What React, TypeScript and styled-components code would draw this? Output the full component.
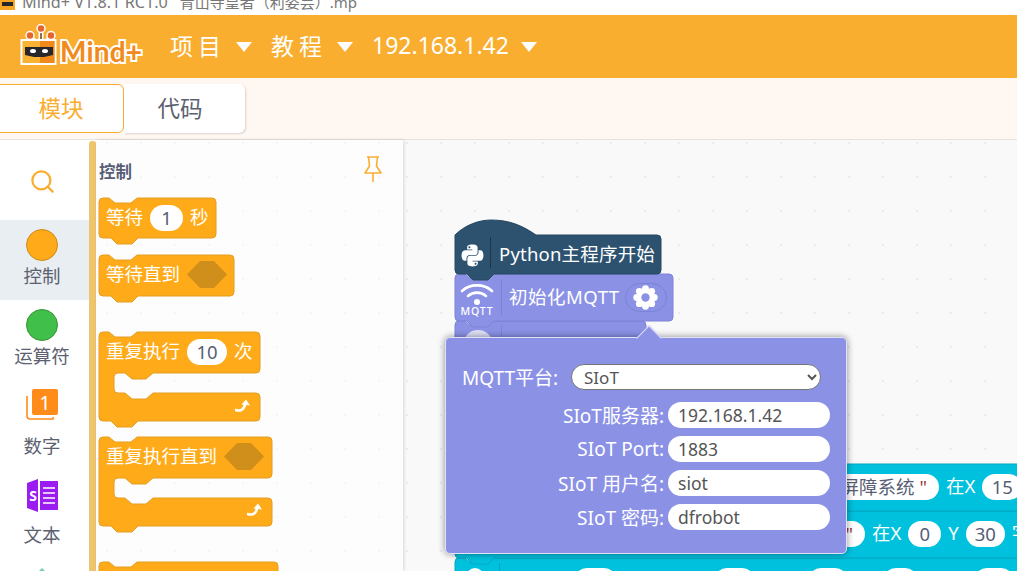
import React from 'react';
import styled, { createGlobalStyle } from 'styled-components';
import { Search } from 'lucide-react';
import { FaPython } from 'react-icons/fa';

const FONT = '"Noto Sans", "Noto Sans CJK SC", sans-serif';
const ORANGE = '#f9ae2f';
const BLOCK = '#ffab19';
const BLOCK_LINE = '#e39e22';
const PURPLE = '#8b92e6';
const PURPLE_LINE = '#7c83d6';
const TEAL = '#00c1dd';
const TEAL_LINE = '#00a8c2';

const Global = createGlobalStyle`
  html, body { margin: 0; padding: 0; background: #fff; }
  body { font-family: ${FONT}; overflow: hidden; }
  * { box-sizing: border-box; }
`;

const Page = styled.div`
  width: 1017px;
  height: 571px;
  display: flex;
  flex-direction: column;
  overflow: hidden;
`;

const TitleBar = styled.div`
  height: 15px;
  flex: none;
  display: flex;
  align-items: flex-end;
  overflow: hidden;
  background: #fff;
  color: #777;
  font-size: 15px;
  line-height: 22px;
  white-space: pre;
`;

const TitleApp = styled.span`
  margin: 0 12px 2px 7px;
  font-size: 16.2px;
`;

const TitleFile = styled.span`
  margin-bottom: 2px;
`;

const Header = styled.header`
  height: 63px;
  flex: none;
  display: flex;
  align-items: center;
  background: ${ORANGE};
  padding-left: 20px;
`;

const Logo = styled.div`
  width: 150px;
  height: 42px;
  margin-top: -5px;
  display: flex;
  align-items: flex-end;
`;

const LogoText = styled.span`
  font-family: Lato, sans-serif;
  font-weight: 700;
  font-size: 28px;
  line-height: 28px;
  margin-left: 3px;
  letter-spacing: 0.2px;
  color: #f08a1d;
  -webkit-text-stroke: 4px #fff;
  paint-order: stroke fill;
`;

const Nav = styled.div<{ $w: number }>`
  width: ${(p) => p.$w}px;
  flex: none;
  display: flex;
  align-items: center;
  justify-content: space-between;
  height: 40px;
  color: #fff;
  font-size: 23px;
  margin-right: 19px;
  padding-bottom: 3px;
`;

const NavLabel = styled.span<{ $spaced?: boolean }>`
  letter-spacing: ${(p) => (p.$spaced ? '5px' : '0')};
  white-space: nowrap;
`;

const Caret = styled.i`
  width: 0;
  height: 0;
  margin-top: 3px;
  border-left: 8px solid transparent;
  border-right: 8px solid transparent;
  border-top: 10px solid #fff;
`;

const SubBar = styled.div`
  height: 62px;
  flex: none;
  padding-top: 6px;
  display: flex;
  align-items: flex-start;
  background: #fff7f2;
  border-bottom: 1px solid #e3e3e3;
`;

const Tab = styled.div<{ $active?: boolean; $w: number }>`
  width: ${(p) => p.$w}px;
  height: 49px;
  margin-left: ${(p) => (p.$active ? '-2px' : '0')};
  padding-right: ${(p) => (p.$active ? '0' : '9px')};
  padding-bottom: 2px;
  position: relative;
  z-index: ${(p) => (p.$active ? 1 : 0)};
  display: flex;
  align-items: center;
  justify-content: center;
  background: #fff;
  font-size: 22.5px;
  border-radius: 0 6px 6px 0;
  color: ${(p) => (p.$active ? ORANGE : '#5c6170')};
  border: ${(p) => (p.$active ? `1px solid ${ORANGE}` : 'none')};
  box-shadow: ${(p) => (p.$active ? 'none' : '1px 1px 2px rgba(0,0,0,.15)')};
`;

const Body = styled.div`
  flex: 1;
  min-height: 0;
  display: flex;
`;

const Categories = styled.nav`
  width: 89px;
  flex: none;
  background: #fff;
  display: flex;
  flex-direction: column;
  overflow: hidden;
`;

const Category = styled.div<{ $h: number; $active?: boolean }>`
  height: ${(p) => p.$h}px;
  flex: none;
  padding: 9px 5px 0 0;
  display: flex;
  flex-direction: column;
  align-items: center;
  background: ${(p) => (p.$active ? '#e9eef2' : 'transparent')};
  color: #5c6170;
  font-size: 18.5px;
  line-height: 26px;
`;

const SearchCell = styled(Category)`
  padding-top: 28px;
  color: ${ORANGE};
`;

const Dot = styled.span<{ $fill: string; $line: string }>`
  width: 32px;
  height: 32px;
  flex: none;
  margin-bottom: 2px;
  border-radius: 50%;
  background: ${(p) => p.$fill};
  border: 1px solid ${(p) => p.$line};
`;

const CategoryIcon = styled.svg<{ $gap: number }>`
  flex: none;
  margin-bottom: ${(p) => p.$gap}px;
`;

const Scrollbar = styled.div`
  width: 7px;
  flex: none;
  margin-top: 1px;
  background: #eec56c;
  border-radius: 3px 3px 0 0;
`;

const dotted = (color: string, x: number, y: number) => `
  background-image: radial-gradient(circle, ${color} 1px, transparent 1.4px);
  background-size: 34px 34px;
  background-position: ${x}px ${y}px;
`;

const Flyout = styled.aside`
  width: 307px;
  flex: none;
  position: relative;
  z-index: 1;
  padding: 18px 0 0 2px;
  overflow: hidden;
  background-color: #fdfdfd;
  ${dotted('#f5f5f5', -6, -14)}
  box-shadow: 1px 0 3px rgba(0, 0, 0, 0.14);
`;

const FlyoutHead = styled.div`
  height: 39px;
  display: flex;
  justify-content: space-between;
  padding: 0 19px 0 1px;
  color: #575e75;
  font-size: 16.5px;
  font-weight: 700;
  line-height: 28px;
`;

const PinIcon = styled.svg`
  margin-top: -2px;
`;

const Workspace = styled.main`
  flex: 1;
  position: relative;
  overflow: hidden;
  background-color: #f9f9f9;
  ${dotted('#ebebeb', -13, -14)}
`;

const Stack = styled.div<{ $x: number; $y: number }>`
  position: absolute;
  left: ${(p) => p.$x}px;
  top: ${(p) => p.$y}px;
`;

const BlockBox = styled.div<{ $w: number; $h: number; $top?: number; $z?: number }>`
  position: relative;
  width: ${(p) => p.$w}px;
  height: ${(p) => p.$h}px;
  margin-top: ${(p) => p.$top ?? 0}px;
  z-index: ${(p) => p.$z ?? 0};
`;

const Shape = styled.svg`
  position: absolute;
  left: 0.5px;
  top: 0.5px;
  overflow: visible;
`;

const Row = styled.div<{ $pad?: number; $h?: number; $gap?: number }>`
  position: relative;
  height: ${(p) => p.$h ?? 41}px;
  padding-left: ${(p) => p.$pad ?? 8}px;
  display: flex;
  align-items: center;
  gap: ${(p) => p.$gap ?? 7}px;
  color: #fff;
  font-size: 18.5px;
  white-space: nowrap;
`;

const Words = styled.span<{ $track?: number }>`
  margin-bottom: 3px;
  letter-spacing: ${(p) => p.$track ?? 0}px;
`;

const Pill = styled.span<{ $w: number; $ml?: number; $right?: boolean }>`
  width: ${(p) => p.$w}px;
  height: 26px;
  flex: none;
  margin-left: ${(p) => p.$ml ?? 0}px;
  padding: ${(p) => (p.$right ? '0 12px 0 0' : '0')};
  border-radius: 13px;
  background: #fff;
  color: #575e75;
  font-size: 18.5px;
  line-height: 25px;
  text-align: ${(p) => (p.$right ? 'right' : 'center')};
`;

const Quote = styled.span`
  color: #a33a3a;
  margin-left: 5px;
`;

const Hex = styled.svg`
  flex: none;
`;

const Turn = styled.svg`
  position: absolute;
  right: 8px;
  bottom: 8px;
`;

const Divider = styled.span<{ $h: number; $x: number; $c: string }>`
  position: absolute;
  left: ${(p) => p.$x}px;
  bottom: 5px;
  width: 1px;
  height: ${(p) => p.$h}px;
  background: ${(p) => p.$c};
`;

const PythonMark = styled(FaPython)`
  position: absolute;
  left: 6px;
  bottom: 5px;
`;

const MqttMark = styled.div`
  position: absolute;
  left: 4px;
  top: 10px;
  width: 38px;
  display: flex;
  flex-direction: column;
  align-items: center;
  color: #fff;
`;

const MqttText = styled.span`
  font-size: 10.5px;
  line-height: 11px;
  letter-spacing: 0.9px;
  font-weight: 500;
`;

const GhostIcon = styled.span`
  position: absolute;
  left: 9px;
  top: 10px;
  width: 30px;
  height: 30px;
  border-radius: 50%;
  background: #dfe1f7;
`;

const GearPill = styled.span`
  width: 42px;
  height: 29px;
  margin-left: -2px;
  flex: none;
  display: flex;
  align-items: center;
  justify-content: center;
  border: 1px solid ${PURPLE_LINE};
  border-radius: 15px;
`;

const Popover = styled.section`
  position: absolute;
  left: 42px;
  top: 197px;
  width: 402px;
  height: 217px;
  z-index: 5;
  padding: 26px 16px 0;
  border: 1px solid #dfe1f7;
  border-radius: 5px;
  background: ${PURPLE};
  box-shadow: 0 0 7px rgba(0, 0, 0, 0.45);
  color: #fff;
  font-size: 19px;

  &::before {
    content: '';
    position: absolute;
    left: 194px;
    top: -9px;
    width: 17px;
    height: 17px;
    transform: rotate(45deg);
    background: ${PURPLE};
    border-left: 1px solid #dfe1f7;
    border-top: 1px solid #dfe1f7;
  }
`;

const SelectRow = styled.label`
  display: flex;
  align-items: center;
  justify-content: space-between;
  width: 359px;
  height: 26px;
  margin-bottom: 12px;
`;

const PlatformSelect = styled.select`
  width: 250px;
  height: 26px;
  padding-left: 8px;
  border: 1px solid #767676;
  border-radius: 13px;
  background-color: #fff;
  color: #555;
  font-family: ${FONT};
  font-size: 17px;
`;

const Field = styled.label`
  display: flex;
  align-items: center;
  justify-content: flex-end;
  gap: 4px;
  height: 26px;
  margin-bottom: 8px;
`;

const FieldInput = styled.input`
  width: 162px;
  height: 26px;
  padding: 0 10px;
  border: none;
  border-radius: 13px;
  background: #fff;
  color: #555;
  font-family: ${FONT};
  font-size: 17.5px;
  outline: none;
`;

const stack = (w: number, h: number) =>
  `M0,4 Q0,0 4,0 H10 L16,5 H32 L38,0 H${w - 4} Q${w},0 ${w},4 V${h - 4} Q${w},${h} ${w - 4},${h} H39 L33,${h + 6} H18 L12,${h} H4 Q0,${h} 0,${h - 4} Z`;

const cShape = (w: number) => {
  const top = 41;
  const arm = 61;
  const bot = 89;
  return `M0,4 Q0,0 4,0 H10 L16,5 H32 L38,0 H${w - 4} Q${w},0 ${w},4 V${top - 4} Q${w},${top} ${w - 4},${top} H54 L47,${top + 6} H33 L26,${top} H19 Q15,${top} 15,${top + 4} V${arm - 4} Q15,${arm} 19,${arm} H26 L33,${arm + 6} H47 L54,${arm} H${w - 4} Q${w},${arm} ${w},${arm + 4} V${bot - 4} Q${w},${bot} ${w - 4},${bot} H39 L33,${bot + 6} H18 L12,${bot} H4 Q0,${bot} 0,${bot - 4} Z`;
};

const hat = (w: number, h: number) =>
  `M0,15 C10,5 24,0 36,0 C55,0 68,6 81,15 H${w - 4} Q${w},15 ${w},19 V${h - 4} Q${w},${h} ${w - 4},${h} H39 L33,${h + 6} H18 L12,${h} H4 Q0,${h} 0,${h - 4} Z`;

function Block(props: {
  w: number;
  h: number;
  d: string;
  fill?: string;
  line?: string;
  top?: number;
  z?: number;
  children?: React.ReactNode;
}) {
  const { w, h, d, fill = BLOCK, line = BLOCK_LINE, top, z, children } = props;
  return (
    <BlockBox $w={w} $h={h} $top={top} $z={z}>
      <Shape width={w} height={h}>
        <path d={d} fill={fill} stroke={line} strokeWidth="1" />
      </Shape>
      {children}
    </BlockBox>
  );
}

function Hexagon() {
  return (
    <Hex width="40" height="27" viewBox="0 0 40 27">
      <path d="M13,0 H27 L40,13.5 L27,27 H13 L0,13.5 Z" fill="#d08e1a" />
    </Hex>
  );
}

function TurnArrow() {
  return (
    <Turn width="16" height="13" viewBox="0 0 16 13">
      <path d="M0.5,11 C5,12.5 9,11 10,5.5" fill="none" stroke="#fff" strokeWidth="2.6" strokeLinecap="round" />
      <path d="M6.5,5.5 L11,0.5 L15,6.5 Z" fill="#fff" />
    </Turn>
  );
}

function Gear() {
  const lobes = [0, 45, 90, 135, 180, 225, 270, 315];
  return (
    <svg width="25" height="25" viewBox="-12 -12 24 24">
      {lobes.map((a) => (
        <circle key={a} r="3.3" cx={8.4 * Math.cos((a * Math.PI) / 180)} cy={8.4 * Math.sin((a * Math.PI) / 180)} fill="#fff" />
      ))}
      <circle r="8.8" fill="#fff" />
      <circle r="4" fill={PURPLE} />
    </svg>
  );
}

function WifiIcon() {
  return (
    <svg width="34" height="23" viewBox="0 0 34 23" fill="none" stroke="#fff" strokeWidth="2.6" strokeLinecap="round">
      <path d="M2,8 C10,0.5 24,0.5 32,8" />
      <path d="M8,13 C13,8.5 21,8.5 26,13" />
      <circle cx="17" cy="19" r="3" fill="#fff" stroke="none" />
    </svg>
  );
}

function RobotLogo() {
  return (
    <svg width="37" height="41" viewBox="0 0 37 41">
      <g stroke="#fff" strokeWidth="5" strokeLinecap="round">
        <path d="M21,6 V17 M10,12 L14,17 M31,12 L27,17" />
      </g>
      <g stroke="#6b4a2a" strokeWidth="1.6">
        <path d="M21,6 V17 M10,12 L14,17 M31,12 L27,17" />
      </g>
      <circle cx="21" cy="4.5" r="4" fill="#e4662b" stroke="#fff" strokeWidth="1.5" />
      <circle cx="10" cy="11.5" r="4" fill="#e4662b" stroke="#fff" strokeWidth="1.5" />
      <circle cx="31" cy="11.5" r="4" fill="#e4662b" stroke="#fff" strokeWidth="1.5" />
      <rect x="1.5" y="16" width="34" height="24" fill="#fab233" stroke="#fff" strokeWidth="2" />
      <rect x="20" y="17" width="14.5" height="22" fill="#f08a1d" />
      <path d="M5,23 H33 V31 L24,33 H14 L5,31 Z" fill="#27262b" />
      <ellipse cx="13" cy="27" rx="3" ry="2" fill="#fff" />
      <ellipse cx="25" cy="27" rx="3" ry="2" fill="#fff" />
    </svg>
  );
}

export default function App() {
  return (
    <Page>
      <Global />
      <TitleBar>
        <svg width="15" height="15" viewBox="0 0 15 15">
          <rect x="0" y="0" width="15" height="10" fill="#f5a623" />
          <rect x="2" y="2" width="11" height="4" fill="#27262b" />
        </svg>
        <TitleApp>Mind+ V1.8.1 RC1.0</TitleApp>
        <TitleFile>青山寺皇者（利姿芸）.mp</TitleFile>
      </TitleBar>

      <Header>
        <Logo>
          <RobotLogo />
          <LogoText>Mind+</LogoText>
        </Logo>
        <Nav $w={82}>
          <NavLabel $spaced>项目</NavLabel>
          <Caret />
        </Nav>
        <Nav $w={82}>
          <NavLabel $spaced>教程</NavLabel>
          <Caret />
        </Nav>
        <Nav $w={165}>
          <NavLabel>192.168.1.42</NavLabel>
          <Caret />
        </Nav>
      </Header>

      <SubBar>
        <Tab $active $w={126}>模块</Tab>
        <Tab $w={121}>代码</Tab>
      </SubBar>

      <Body>
        <Categories>
          <SearchCell $h={80}>
            <Search size={27} strokeWidth={2} />
          </SearchCell>
          <Category $h={80} $active>
            <Dot $fill="#ffab19" $line="#cf8b17" />
            控制
          </Category>
          <Category $h={80}>
            <Dot $fill="#40bf4a" $line="#389438" />
            运算符
          </Category>
          <Category $h={90}>
            <CategoryIcon $gap={13} width="32" height="31" viewBox="0 0 32 31">
              <path d="M1,7 V27 Q1,30 4,30 H27 V28" fill="none" stroke="#ff8c1a" strokeWidth="1.6" />
              <rect x="6" y="0" width="26" height="26" rx="2" fill="#ff8c1a" />
              <text x="19" y="21" fill="#fff" fontSize="20" fontFamily={FONT} textAnchor="middle">1</text>
            </CategoryIcon>
            数字
          </Category>
          <Category $h={89}>
            <CategoryIcon $gap={10} width="32" height="33" viewBox="0 0 32 33">
              <path d="M1,4 L12,0 V33 L1,29 Z" fill="#9b1cf0" />
              <rect x="14" y="2" width="18" height="29" fill="#9b1cf0" />
              <path d="M17,9 H29 M17,14 H29 M17,19 H29 M17,24 H29" stroke="#fff" strokeWidth="1.6" />
              <text x="7" y="22" fill="#fff" fontSize="14" fontWeight="700" fontFamily={FONT} textAnchor="middle">S</text>
            </CategoryIcon>
            文本
          </Category>
          <Category $h={30}>
            <svg width="32" height="32" viewBox="0 0 32 32">
              <path d="M16,0 L24,8 H8 Z" fill="#7fcabd" />
            </svg>
          </Category>
        </Categories>
        <Scrollbar />

        <Flyout>
          <FlyoutHead>
            控制
            <PinIcon width="22" height="27" viewBox="0 0 22 27" fill="none" stroke="#f9ae2f" strokeWidth="1.6">
              <path d="M5,1 H17 M6.5,1 L7.5,10 L3,17 H19 L14.5,10 L15.5,1 M11,17 V26" strokeLinejoin="round" />
            </PinIcon>
          </FlyoutHead>

          <Block w={117} h={40} d={stack(117, 40)}>
            <Row>
              <Words>等待</Words>
              <Pill $w={33}>1</Pill>
              <Words>秒</Words>
            </Row>
          </Block>
          <Block w={135} h={41} d={stack(135, 41)} top={17}>
            <Row>
              <Words>等待直到</Words>
              <Hexagon />
            </Row>
          </Block>
          <Block w={161} h={89} d={cShape(161)} top={36}>
            <Row>
              <Words>重复执行</Words>
              <Pill $w={40}>10</Pill>
              <Words>次</Words>
            </Row>
            <TurnArrow />
          </Block>
          <Block w={173} h={88} d={cShape(173)} top={16}>
            <Row>
              <Words>重复执行直到</Words>
              <Hexagon />
            </Row>
            <TurnArrow />
          </Block>
          <Block w={179} h={41} d={stack(179, 41)} top={37} />
        </Flyout>

        <Workspace>
          <Stack $x={51} $y={79}>
            <Block w={206} h={54} d={hat(206, 54)} fill="#2c5270" line="#264863" z={2}>
              <PythonMark size={25} color="#fff" />
              <Divider $x={36} $h={31} $c="#1c3547" />
              <Row $pad={45} $h={70}>
                <Words $track={0.2}>Python主程序开始</Words>
              </Row>
            </Block>
            <Block w={218} h={47} d={stack(218, 47)} fill={PURPLE} line={PURPLE_LINE} z={1} top={0}>
              <MqttMark>
                <WifiIcon />
                <MqttText>MQTT</MqttText>
              </MqttMark>
              <Divider $x={47} $h={36} $c={PURPLE_LINE} />
              <Row $pad={55} $h={49} $gap={7}>
                <Words $track={0.5}>初始化MQTT</Words>
                <GearPill>
                  <Gear />
                </GearPill>
              </Row>
            </Block>
            <Block w={191} h={47} d={stack(191, 47)} fill={PURPLE} line={PURPLE_LINE}>
              <GhostIcon />
              <Divider $x={47} $h={36} $c={PURPLE_LINE} />
            </Block>
          </Stack>

          <Stack $x={51} $y={323}>
            <Block w={640} h={47} d={stack(640, 47)} fill={TEAL} line={TEAL_LINE} z={2}>
              <Row $pad={246} $h={47}>
                <Pill $w={239} $right>
                  屏障系统<Quote>"</Quote>
                </Pill>
                <Words>在X</Words>
                <Pill $w={40}>15</Pill>
              </Row>
            </Block>
            <Block w={640} h={47} d={stack(640, 47)} fill={TEAL} line={TEAL_LINE} z={1}>
              <Row $pad={306} $h={47}>
                <Pill $w={105} $right>
                  <Quote>"</Quote>
                </Pill>
                <Words>在X</Words>
                <Pill $w={33}>0</Pill>
                <Words>Y</Words>
                <Pill $w={39}>30</Pill>
                <Words>字</Words>
              </Row>
            </Block>
            <Block w={640} h={47} d={stack(640, 47)} fill={TEAL} line={TEAL_LINE}>
              <Divider $x={45} $h={36} $c={TEAL_LINE} />
              <Row $pad={12} $h={47} $gap={0}>
                <Pill $w={18} />
                <Pill $w={43} $ml={90} />
                <Pill $w={41} $ml={97} />
                <Pill $w={40} $ml={53} />
                <Pill $w={35} $ml={35} />
                <Pill $w={40} $ml={56} />
              </Row>
            </Block>
          </Stack>

          <Popover>
            <SelectRow>
              MQTT平台:
              <PlatformSelect defaultValue="SIoT">
                <option>SIoT</option>
              </PlatformSelect>
            </SelectRow>
            <Field>
              SIoT服务器:
              <FieldInput defaultValue="192.168.1.42" />
            </Field>
            <Field>
              SIoT Port:
              <FieldInput defaultValue="1883" />
            </Field>
            <Field>
              SIoT 用户名:
              <FieldInput defaultValue="siot" />
            </Field>
            <Field>
              SIoT 密码:
              <FieldInput defaultValue="dfrobot" />
            </Field>
          </Popover>
        </Workspace>
      </Body>
    </Page>
  );
}
